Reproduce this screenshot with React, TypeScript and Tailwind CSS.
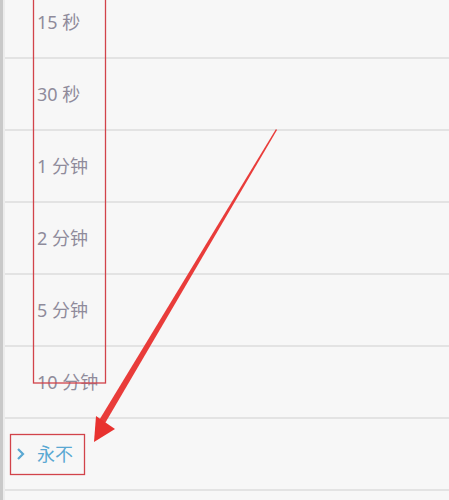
import React from "react";

const options = ["15 秒", "30 秒", "1 分钟", "2 分钟", "5 分钟", "10 分钟"];

export default function App() {
  return (
    <div
      className="relative w-[449px] h-[500px] overflow-hidden bg-[#f7f7f7] flex"
      style={{ fontFamily: '"Noto Sans", "Noto Sans CJK SC", sans-serif' }}
    >
      <div className="w-[3px] bg-[#c9c9c9]" />
      <div className="w-[2px] bg-[#ececec]" />
      <div className="flex-1 -mt-[13px]">
        {options.map((o) => (
          <div
            key={o}
            className="h-[72px] border-b-2 border-[#e3e3e3] flex items-center pl-[32px] text-[18px] text-[#8f8b9b]"
          >
            {o}
          </div>
        ))}
        <div className="h-[72px] border-b-2 border-[#e3e3e3] flex items-center pl-[11px] text-[18px] text-[#5aa8d2]">
          <svg width="10" height="14" viewBox="0 0 10 14" className="mr-[11px]">
            <path d="M2 2 L7 7 L2 12" fill="none" stroke="#5aa8d2" strokeWidth="2.2" />
          </svg>
          永不
        </div>
      </div>

      {/* annotation overlay */}
      <svg className="absolute left-0 top-0" width="449" height="500" viewBox="0 0 449 500">
        <rect x="33.5" y="-2" width="72" height="385" fill="none" stroke="#d2434a" strokeWidth="1.3" />
        <rect x="10.5" y="434.5" width="74" height="40" fill="none" stroke="#d2434a" strokeWidth="1.3" />
        <path d="M276 129 L277 130 L104 425 L98 422 Z" fill="#e8322f" opacity="0.95" />
        <path d="M94 442 L96 416 L115 429 Z" fill="#e8322f" />
      </svg>
    </div>
  );
}
